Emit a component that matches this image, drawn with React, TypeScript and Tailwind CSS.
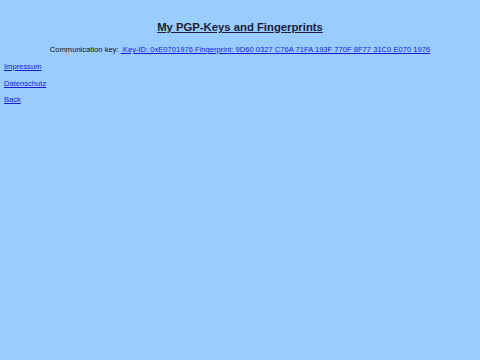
import React from "react";

export default function App() {
  return (
    <div className="min-h-[360px] w-full bg-[#99ccff] font-['Liberation_Sans',Arial,sans-serif] text-black">
      <div className="pt-[18px] px-[4px]">
        <h1 className="text-center text-[11.3px] font-bold underline leading-[18px] text-[#1c1c3a]">
          My PGP-Keys and Fingerprints
        </h1>
        <p className="mt-[9px] text-center text-[7.6px] leading-[10px] text-[#111]">
          Communication key:{" "}
          <a href="#" className="text-[#1a1ad6] underline">
            &nbsp;Key-ID: 0xE0701976 Fingerprint: 9D60 0327 C76A 71FA 193F 770F 8F77 31C0 E070 1976
          </a>
        </p>
        <div className="mt-[7px] flex flex-col gap-[6.5px] text-[7.6px] leading-[10px]">
          <a href="#" className="text-[#1a1ad6] underline">Impressum</a>
          <a href="#" className="text-[#1a1ad6] underline">Datenschutz</a>
          <a href="#" className="text-[#1a1ad6] underline">Back</a>
        </div>
      </div>
    </div>
  );
}
